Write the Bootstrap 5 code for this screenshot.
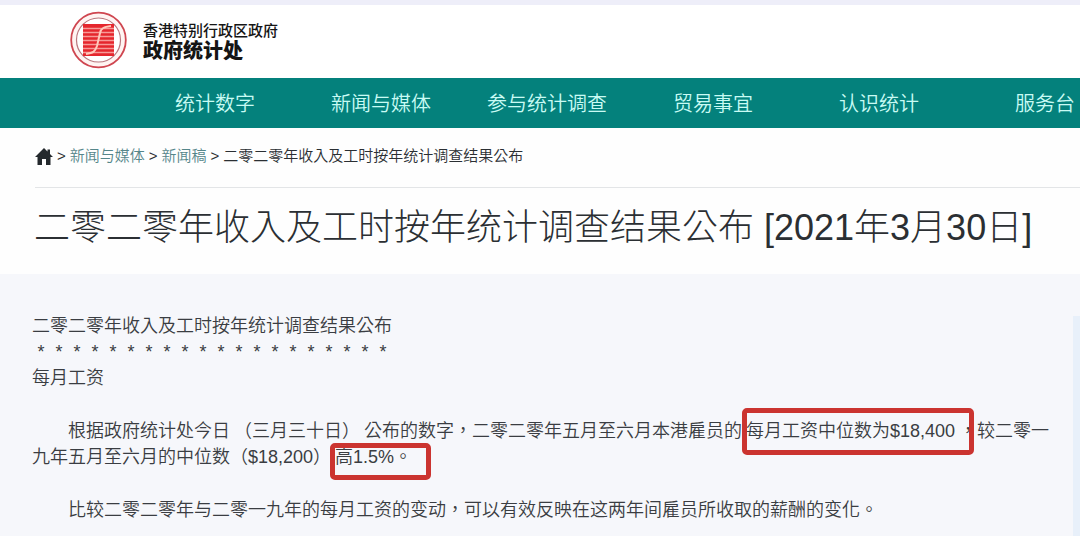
<!DOCTYPE html>
<html lang="zh-TW">
<head>
<meta charset="utf-8">
<meta name="viewport" content="width=device-width, initial-scale=1">
<title>政府统计处</title>
<link href="https://cdn.jsdelivr.net/npm/bootstrap@5.3.0/dist/css/bootstrap.min.css" rel="stylesheet">
<style>
body{font-family:"Liberation Sans","Noto Sans CJK TC",sans-serif;font-weight:350;color:#2b2f33;background:#fefefe;overflow-x:hidden;text-spacing-trim:space-all}
.topline{height:5px;background:#eeeef9}
.masthead{height:73px;padding-left:70px;gap:16px;color:#151515}
.crest{margin-bottom:4px}
.dept-region{font-size:15px;line-height:18px;font-weight:500}
.dept-name{font-size:20px;line-height:22px;font-weight:900}
.mainbar{background:#04817c;height:50px;padding-left:132px;overflow:hidden}
.mainbar .nav-item{flex:0 0 166px;text-align:center}
.mainbar .nav-link{color:#c9fbf4;font-size:20px;line-height:30px;padding:11px 0 9px}
.crumbs{font-size:15px;line-height:24px;padding:16px 0 19px;margin-left:35px;gap:4px;border-bottom:1px solid #e3e5e7}
.crumbs a{color:#55868a;text-decoration:none}
.headline{font-size:36px;line-height:50px;font-weight:300;padding:15px 20px 21px 34px;margin:0}
.release{background:#f6f7fb}
.release-body{font-size:18px;line-height:26px;padding:39px 12px 14px 32px;color:#3a3d42}
.release-body p{margin-bottom:27px}
.stars{width:20em}
.indent{text-indent:2em}
.aside-date{padding:0 4px}
.rail{width:7px;margin-top:42px;background:#e8f0fa}
.marked{position:relative;padding:0 4px}
.marked::after{content:"";position:absolute;border:5px solid #cb3430;border-radius:5px;pointer-events:none}
.mark-wage::after{inset:-13px -15px -14px 0}
.mark-rise::after{inset:-4px -15px -13px -1px}
</style>
</head>
<body>
<div class="topline"></div>
<header class="masthead d-flex align-items-center bg-white">
  <svg class="crest" width="57" height="58" viewBox="0 0 57 58" aria-hidden="true">
    <circle cx="28.500" cy="29" r="27.300" fill="#fff4f2" stroke="#cf4650" stroke-width="1.800"/>
    <circle cx="28.500" cy="29" r="22" fill="#fff" stroke="#b9777e" stroke-width="1.200"/>
    <rect x="13" y="13" width="31" height="32" fill="#e5262d"/>
    <path d="M13 17.500H44M13 21.500H44M13 25.500H44M13 29.500H44M13 33.500H44M13 37.500H44M13 41.500H44" stroke="#f79a98" stroke-width="1.300"/>
    <path d="M16 43C23 42 25 41 27 35L30 22C31 17 34 16 41 15" fill="none" stroke="#ffc9bb" stroke-width="2"/>
  </svg>
  <div>
    <div class="dept-region">香港特别行政区政府</div>
    <div class="dept-name">政府统计处</div>
  </div>
</header>
<nav class="mainbar" aria-label="主目录">
  <ul class="nav flex-nowrap">
    <li class="nav-item"><a class="nav-link" href="#">统计数字</a></li>
    <li class="nav-item"><a class="nav-link" href="#">新闻与媒体</a></li>
    <li class="nav-item"><a class="nav-link" href="#">参与统计调查</a></li>
    <li class="nav-item"><a class="nav-link" href="#">贸易事宜</a></li>
    <li class="nav-item"><a class="nav-link" href="#">认识统计</a></li>
    <li class="nav-item"><a class="nav-link" href="#">服务台</a></li>
  </ul>
</nav>
<nav class="crumbs d-flex align-items-center" aria-label="路径">
  <a href="#" class="d-flex" aria-label="主页"><svg width="18" height="17" viewBox="0 0 18 17"><path d="M9 0L12.500 3.500V1.500H15V6L18 9H15.500V17H11V11H7V17H2.500V9H0Z" fill="#24292d"/></svg></a>
  <span>&gt;</span>
  <a href="#">新闻与媒体</a>
  <span>&gt;</span>
  <a href="#">新闻稿</a>
  <span>&gt;</span>
  <span>二零二零年收入及工时按年统计调查结果公布</span>
</nav>
<h1 class="headline">二零二零年收入及工时按年统计调查结果公布 [2021年3月30日]</h1>
<main class="release d-flex">
  <article class="release-body flex-fill">
    <div>二零二零年收入及工时按年统计调查结果公布</div>
    <div class="stars d-flex justify-content-around"><span>*</span><span>*</span><span>*</span><span>*</span><span>*</span><span>*</span><span>*</span><span>*</span><span>*</span><span>*</span><span>*</span><span>*</span><span>*</span><span>*</span><span>*</span><span>*</span><span>*</span><span>*</span><span>*</span><span>*</span></div>
    <p>每月工资</p>
    <p class="indent">根据政府统计处今日<span class="aside-date">（三月三十日）</span>公布的数字，二零二零年五月至六月本港雇员的<span class="marked mark-wage">每月工资中位数为$18,400</span>，较二零一九年五月至六月的中位数（$18,200）<span class="marked mark-rise">高1.5%。</span></p>
    <p class="indent mb-0">比较二零二零年与二零一九年的每月工资的变动，可以有效反映在这两年间雇员所收取的薪酬的变化。</p>
  </article>
  <div class="rail flex-shrink-0"></div>
</main>
<script src="https://cdn.jsdelivr.net/npm/bootstrap@5.3.0/dist/js/bootstrap.bundle.min.js"></script>
</body>
</html>
